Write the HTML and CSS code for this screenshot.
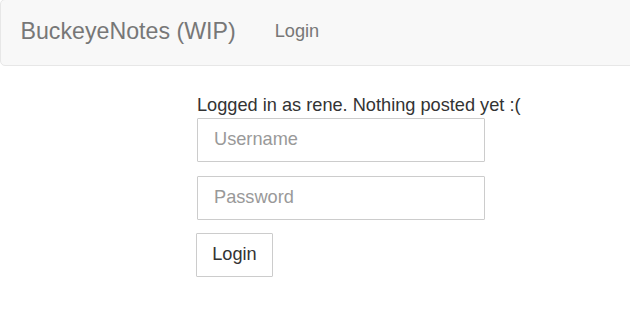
FILE: index.html
```html
<!DOCTYPE html>
<html>
<head>
<meta charset="utf-8">
<link rel="stylesheet" href="styles.css">
</head>
<body>
<nav class="navbar">
  <a class="brand" href="#">BuckeyeNotes (WIP)</a>
  <a class="nav-link" href="#">Login</a>
</nav>
<main class="content">
  <p class="status">Logged in as rene. Nothing posted yet :(</p>
  <form class="login-form">
    <input class="field" type="text" placeholder="Username">
    <input class="field" type="password" placeholder="Password">
    <button class="btn" type="button">Login</button>
  </form>
</main>
</body>
</html>
```
FILE: styles.css
```css
html, body {
  margin: 0;
  padding: 0;
  background: #fff;
}
body {
  font-family: "Liberation Sans", Arial, sans-serif;
  font-size: 18.2px;
  line-height: 26px;
  color: #333;
  overflow: hidden;
}
.navbar {
  display: flex;
  align-items: center;
  height: 65px;
  margin-top: -1px;
  margin-right: -20px;
  background: #f8f8f8;
  border: 1px solid #e7e7e7;
  border-radius: 5px;
}
.brand {
  padding: 0 19.5px;
  font-size: 23.2px;
  line-height: 26px;
  color: #777;
  text-decoration: none;
  margin-top: -3px;
}
.nav-link {
  padding: 0 19.5px;
  font-size: 18.2px;
  color: #777;
  text-decoration: none;
  margin-top: -3px;
}
.content {
  padding: 26px 0 0 197px;
}
.status {
  margin: 0;
  line-height: 26px;
}
.login-form {
  display: flex;
  flex-direction: column;
  align-items: flex-start;
}
.field {
  box-sizing: border-box;
  width: 288px;
  height: 44px;
  margin: 0 0 14px 0;
  padding: 0 16px 1px;
  font-family: "Liberation Sans", Arial, sans-serif;
  font-size: 18.2px;
  color: #555;
  border: 1px solid #ccc;
  border-radius: 1px;
  background: #fff;
  outline: none;
}
.field::placeholder {
  color: #999;
}
.btn {
  box-sizing: border-box;
  height: 44px;
  width: 77px;
  margin: -1px 0 0 -1px;
  padding: 0 0 1px;
  font-family: "Liberation Sans", Arial, sans-serif;
  font-size: 18.2px;
  color: #333;
  background: #fff;
  border: 1px solid #ccc;
  border-radius: 1px;
}
```
